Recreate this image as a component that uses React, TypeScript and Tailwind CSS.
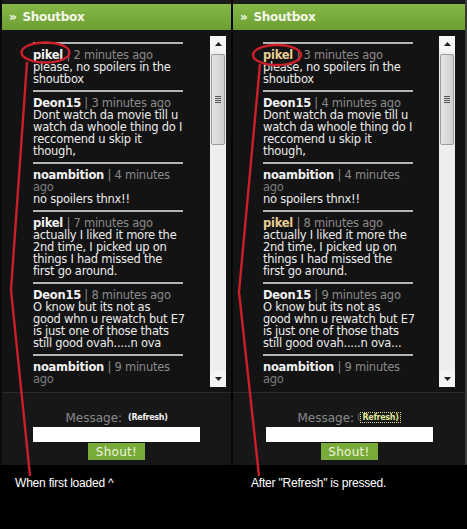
import React from "react";

type Msg = { name: string; time: string[]; body: string[] };

const leftMsgs: Msg[] = [
  { name: "pikel", time: ["2 minutes ago"], body: ["please, no spoilers in the", "shoutbox"] },
  { name: "Deon15", time: ["3 minutes ago"], body: ["Dont watch da movie till u", "watch da whoole thing do I", "reccomend u skip it", "though,"] },
  { name: "noambition", time: ["4 minutes", "ago"], body: ["no spoilers thnx!!"] },
  { name: "pikel", time: ["7 minutes ago"], body: ["actually I liked it more the", "2nd time, I picked up on", "things I had missed the", "first go around."] },
  { name: "Deon15", time: ["8 minutes ago"], body: ["O know but its not as", "good whn u rewatch but E7", "is just one of those thats", "still good ovah.....n ova"] },
  { name: "noambition", time: ["9 minutes", "ago"], body: [] },
];

const rightMsgs: Msg[] = [
  { name: "pikel", time: ["3 minutes ago"], body: ["please, no spoilers in the", "shoutbox"] },
  { name: "Deon15", time: ["4 minutes ago"], body: ["Dont watch da movie till u", "watch da whoole thing do I", "reccomend u skip it", "though,"] },
  { name: "noambition", time: ["4 minutes", "ago"], body: ["no spoilers thnx!!"] },
  { name: "pikel", time: ["8 minutes ago"], body: ["actually I liked it more the", "2nd time, I picked up on", "things I had missed the", "first go around."] },
  { name: "Deon15", time: ["9 minutes ago"], body: ["O know but its not as", "good whn u rewatch but E7", "is just one of those thats", "still good ovah.....n ova..."] },
  { name: "noambition", time: ["9 minutes", "ago"], body: [] },
];

const font = { fontFamily: '"DejaVu Sans", Verdana, sans-serif' };

function Message({ m, highlight }: { m: Msg; highlight: boolean }) {
  const nameCls =
    highlight && m.name === "pikel" ? "font-bold text-[#e9cf92]" : "font-bold text-[#f2f2f2]";
  return (
    <div>
      <div className="h-[2px] w-[150px] bg-[#b4b4b4]" />
      <div className="pt-[5px] pb-[5px] text-[11.5px] leading-[12px] tracking-[-0.25px]">
        <div className="whitespace-nowrap">
          <span className={nameCls}>{m.name}</span>
          <span className="text-[#8a8a8a]"> | {m.time[0]}</span>
        </div>
        {m.time.slice(1).map((t, i) => (
          <div key={"t" + i} className="whitespace-nowrap text-[#7c7c7c]">
            {t}
          </div>
        ))}
        {m.body.map((b, i) => (
          <div key={"b" + i} className="whitespace-nowrap text-[#ececec]">
            {b}
          </div>
        ))}
      </div>
    </div>
  );
}

function Scrollbar() {
  return (
    <div className="flex h-[351px] w-[16px] flex-col bg-[#eeeeee]">
      <div className="flex h-[16px] w-[16px] items-center justify-center bg-[#f6f6f6]">
        <svg width="7" height="4" viewBox="0 0 7 4">
          <polygon points="0,4 7,4 3.5,0" fill="#222" />
        </svg>
      </div>
      <div className="mx-[1px] mt-[2px] flex h-[91px] items-center justify-center rounded-[2px] border border-[#9c9c9c] bg-gradient-to-r from-[#e4e4e4] to-[#cfcfcf]">
        <div className="flex flex-col gap-[1px]">
          <div className="h-[1px] w-[6px] bg-[#555]" />
          <div className="h-[1px] w-[6px] bg-[#555]" />
          <div className="h-[1px] w-[6px] bg-[#555]" />
          <div className="h-[1px] w-[6px] bg-[#555]" />
        </div>
      </div>
      <div className="flex-1" />
      <div className="flex h-[16px] w-[16px] items-center justify-center bg-[#f4f4f4]">
        <svg width="7" height="4" viewBox="0 0 7 4">
          <polygon points="0,0 7,0 3.5,4" fill="#222" />
        </svg>
      </div>
    </div>
  );
}

function Panel({ msgs, right }: { msgs: Msg[]; right: boolean }) {
  return (
    <div
      className={
        right
          ? "flex w-[234px] flex-col border-r-2 border-[#3a3a3a] bg-[#131313]"
          : "flex w-[231px] flex-col border-l-2 border-[#0a0a0a] bg-[#131313]"
      }
      style={font}
    >
      <div className="h-[4px] bg-[#1b1b1b]" />
      <div className="flex h-[26px] items-center bg-gradient-to-b from-[#86b848] to-[#6d9e32] pl-[7px] text-[12px] font-bold tracking-[-0.3px] text-[#f4f8ea]">
        <span className="mr-[6px]">»</span>
        <span>Shoutbox</span>
      </div>
      <div className={right ? "flex h-[362px] pl-[30px] pt-[6px]" : "flex h-[362px] pl-[31px] pt-[6px]"}>
        <div className="h-[350px] w-[156px] overflow-hidden pt-[6px]">
          {msgs.map((m, i) => (
            <Message key={i} m={m} highlight={right} />
          ))}
        </div>
        <div className={right ? "ml-[20px]" : "ml-[21px]"}>
          <Scrollbar />
        </div>
      </div>
      <div className="flex h-[73px] flex-col items-center border-t border-[#2a2a2a] bg-[#171717] pt-[18px]">
        <div className="flex h-[14px] items-center whitespace-nowrap">
          <span className="text-[12px] text-[#8a8a8a]">Message:</span>
          {right ? (
            <span className="ml-[3px] text-[8px] font-bold tracking-[-0.3px]">
              <span className="text-[#555]">(</span>
              <span className="border border-dotted border-[#d8e08a] px-[1px] text-[#dfe69a]">Refresh)</span>
            </span>
          ) : (
            <span className="ml-[6px] text-[8px] font-bold tracking-[-0.3px] text-[#f4f4f4]">(Refresh)</span>
          )}
        </div>
        <div className="mt-[2px] h-[15px] w-[167px] bg-white" />
        <div className="mt-[1px] flex h-[17px] w-[57px] items-center justify-center bg-[#78ab3a] text-[12px] tracking-[0.3px] text-[#eef5df]">
          Shout!
        </div>
      </div>
    </div>
  );
}

export default function App() {
  return (
    <div className="relative h-[529px] w-[467px] overflow-hidden bg-black">
      <div className="flex">
        <Panel msgs={leftMsgs} right={false} />
        <div className="w-[2px] bg-[#050505]" />
        <Panel msgs={rightMsgs} right={true} />
      </div>
      <div
        className="relative h-[63px] text-[12px] tracking-[-0.2px] text-white"
        style={{ fontFamily: '"Liberation Sans", Arial, sans-serif' }}
      >
        <div className="flex pt-[9px]">
          <div className="ml-[15px] w-[236px]">When first loaded ^</div>
          <div>After "Refresh" is pressed.</div>
        </div>
      </div>
      <svg className="pointer-events-none absolute left-0 top-0" width="467" height="529" viewBox="0 0 467 529">
        <g fill="none" stroke="#cc1f2a" strokeWidth="2.4" strokeLinejoin="round">
          <ellipse cx="45.5" cy="52.5" rx="24" ry="10" />
          <polyline points="27,62 11,290 30,476" />
          <ellipse cx="277" cy="55" rx="24" ry="10" />
          <polyline points="260,64 239,292 259,476" />
        </g>
      </svg>
    </div>
  );
}
